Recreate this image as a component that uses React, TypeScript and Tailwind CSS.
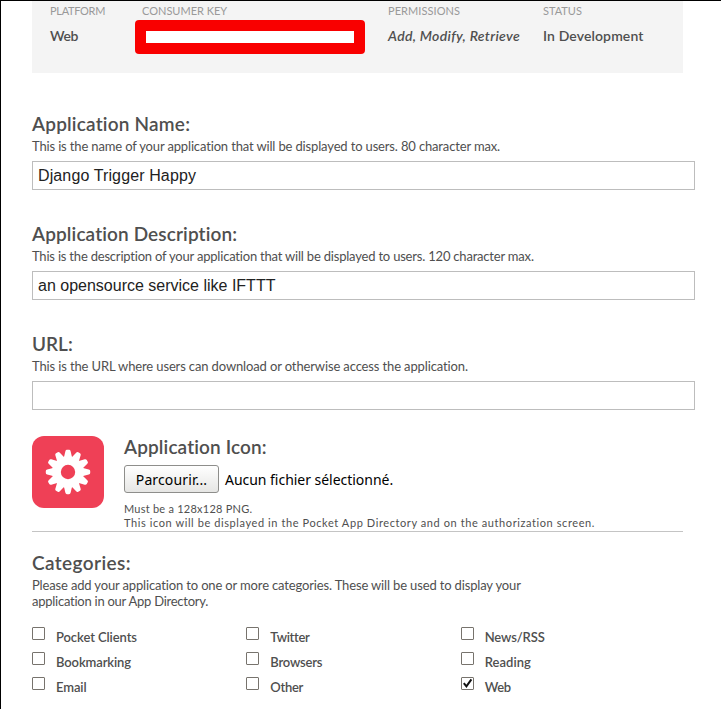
type FieldProps = {
  title: string;
  titleClass: string;
  hint: string;
  hintClass: string;
  value: string;
  valueClass?: string;
};

const heading = "text-[19px] leading-[26px] font-semibold whitespace-nowrap";
const hintText = "text-[13px] leading-4 whitespace-nowrap";

function Field({ title, titleClass, hint, hintClass, value, valueClass = "" }: FieldProps) {
  return (
    <section className="h-[110px]">
      <h2 className={`${heading} ${titleClass}`}>{title}</h2>
      <p className={`mt-px ${hintText} ${hintClass}`}>{hint}</p>
      <div
        className={`mt-[7px] flex h-[29px] w-[663px] items-center border border-[#bdbdbd] pl-[5px] font-['Liberation_Sans',sans-serif] text-base whitespace-nowrap text-[#222] ${valueClass}`}
      >
        {value}
      </div>
    </section>
  );
}

function GearIcon() {
  return (
    <svg viewBox="0 0 72 72" className="size-[72px] shrink-0">
      <rect width="72" height="72" rx="12" fill="#ef4056" />
      <g fill="#fff">
        <circle cx="36" cy="36" r="15.8" />
        {Array.from({ length: 12 }, (_, i) => (
          <path
            key={i}
            transform={`rotate(${i * 30} 36 36)`}
            d="M31.8 22 L33.4 15.2 Q33.7 13.8 35 13.8 L37 13.8 Q38.3 13.8 38.6 15.2 L40.2 22 Z"
          />
        ))}
      </g>
      <circle cx="36" cy="36" r="7.2" fill="#ef4056" />
    </svg>
  );
}

function Checkbox({ label, labelClass, checked }: { label: string; labelClass: string; checked?: boolean }) {
  return (
    <div className="flex h-[25px]">
      <span className="mt-[2px] flex size-[13px] items-center justify-center rounded-[1px] border border-[#77736d] bg-white">
        {checked && (
          <svg viewBox="0 0 11 11" className="size-[11px]" fill="none" stroke="#111" strokeWidth="2">
            <path d="M1.8 5.2 L4.4 8.4 L9.4 1.4" />
          </svg>
        )}
      </span>
      <span className={`ml-[11px] pt-1 text-[13px] leading-4 font-semibold ${labelClass}`}>{label}</span>
    </div>
  );
}

const categories = [
  { label: "Pocket Clients", labelClass: "tracking-[-0.08px]" },
  { label: "Twitter", labelClass: "tracking-[-0.3px]" },
  { label: "News/RSS", labelClass: "tracking-[-0.12px]" },
  { label: "Bookmarking", labelClass: "tracking-[-0.12px]" },
  { label: "Browsers", labelClass: "tracking-[-0.2px]" },
  { label: "Reading", labelClass: "tracking-[0.05px]" },
  { label: "Email", labelClass: "tracking-[-0.1px]" },
  { label: "Other", labelClass: "tracking-[-0.3px]" },
  { label: "Web", labelClass: "tracking-[-0.3px]", checked: true },
];

export default function App() {
  return (
    <div className="h-[709px] w-[721px] overflow-hidden border-t border-l border-black bg-white pl-[31px] font-['Lato',sans-serif] text-[#4f4f4f]">
      <header className="flex h-[72px] w-[651px] bg-[#f4f4f4] pt-[3px] whitespace-nowrap">
        <div className="w-[85px] pl-[18px]">
          <div className="text-[11px] leading-[14px] tracking-[-0.3px] text-[#999]">PLATFORM</div>
          <div className="mt-[9px] text-sm leading-[18px] font-semibold tracking-[-0.3px]">Web</div>
        </div>
        <div className="w-[271px] pl-[18px]">
          <div className="pl-[7px] text-[11px] leading-[14px] text-[#999]">CONSUMER KEY</div>
          <div className="mt-[2px] h-[34px] w-[230px] rounded-[4px] bg-[#f90000] px-[11px] py-[11px]">
            <div className="h-3 w-[208px] bg-white" />
          </div>
        </div>
        <div className="w-[155px]">
          <div className="text-[11px] leading-[14px] tracking-[0.07px] text-[#999]">PERMISSIONS</div>
          <div className="mt-[9px] text-sm leading-[18px] font-semibold tracking-[0.32px] italic">Add, Modify, Retrieve</div>
        </div>
        <div>
          <div className="text-[11px] leading-[14px] text-[#999]">STATUS</div>
          <div className="mt-[9px] text-sm leading-[18px] font-semibold tracking-[0.12px]">In Development</div>
        </div>
      </header>

      <main className="pt-[38px]">
        <Field
          title="Application Name:"
          titleClass="tracking-[0.2px]"
          hint="This is the name of your application that will be displayed to users. 80 character max."
          hintClass="tracking-[-0.15px]"
          value="Django Trigger Happy"
          valueClass="tracking-[0.12px]"
        />
        <Field
          title="Application Description:"
          titleClass="tracking-[0.12px]"
          hint="This is the description of your application that will be displayed to users. 120 character max."
          hintClass="tracking-[-0.2px]"
          value="an opensource service like IFTTT"
        />
        <Field
          title="URL:"
          titleClass="tracking-normal"
          hint="This is the URL where users can download or otherwise access the application."
          hintClass="tracking-[-0.13px]"
          value=""
        />

        <section className="-mt-[6px] flex h-[97px] w-[651px] border-b border-[#c4c4c4] pt-[1px]">
          <GearIcon />
          <div className="-mt-[2px] ml-5 whitespace-nowrap">
            <h2 className={`${heading} tracking-[0.12px]`}>Application Icon:</h2>
            <div className="mt-[5px] flex items-center font-['Noto_Sans',sans-serif] text-sm text-black">
              <button className="h-[28px] w-[95px] rounded-[3px] border border-[#8e8e8b] bg-linear-to-b from-white to-[#e6e6e4] pt-[2px] tracking-[0.13px]">
                Parcourir...
              </button>
              <span className="ml-[6px] pt-[2px] tracking-[-0.03px]">Aucun fichier sélectionné.</span>
            </div>
            <p className="mt-[9px] text-[11px] leading-[14px] tracking-[0.24px]">Must be a 128x128 PNG.</p>
            <p className="text-[11px] leading-[14px] tracking-[0.59px]">
              This icon will be displayed in the Pocket App Directory and on the authorization screen.
            </p>
          </div>
        </section>

        <section className="pt-[18px]">
          <h2 className={`${heading} tracking-[0.4px]`}>Categories:</h2>
          <p className={`mt-px ${hintText} tracking-[-0.15px]`}>
            Please add your application to one or more categories. These will be used to display your
          </p>
          <p className={`${hintText} tracking-[-0.25px]`}>application in our App Directory.</p>
          <div className="mt-4 grid w-[643px] grid-cols-3">
            {categories.map((c) => (
              <Checkbox key={c.label} {...c} />
            ))}
          </div>
        </section>
      </main>
    </div>
  );
}
